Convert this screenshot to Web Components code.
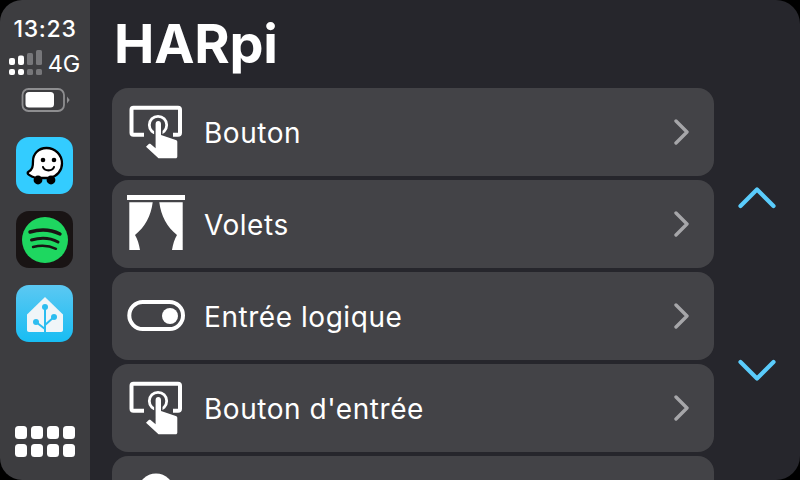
<!DOCTYPE html>
<html>
<head>
<meta charset="utf-8">
<style>
  html, body { margin: 0; padding: 0; width: 800px; height: 480px; background: #000; overflow: hidden; }
</style>
</head>
<body>
<script>
class TouchIcon extends HTMLElement {
  constructor() {
    super();
    this.attachShadow({ mode: 'open' });
    this.shadowRoot.innerHTML = `
      <style>
        :host { display: block; width: 64px; height: 64px; }
        svg { display: block; }
      </style>
      <svg width="64" height="64" viewBox="0 0 64 64" fill="none">
        <path d="M19 34.700H8.500a2 2 0 0 1-2-2V9.700a2 2 0 0 1 2-2H53a2 2 0 0 1 2 2v23a2 2 0 0 1-2 2h-5" stroke="#fff" stroke-width="4"/>
        <circle cx="33" cy="25" r="8.700" stroke="#fff" stroke-width="2.800"/>
        <path d="M33.300 21c-1.700 0-2.700 1.300-2.700 3v24.300l-5-4.300c-.6-.5-1.300-.5-1.800 0L21 46.800l12.500 11.500h17c1.200 0 1.800-.8 1.800-1.800V41.800c0-1-.6-1.600-1.500-1.900L36 35V24c0-1.700-1-3-2.700-3z" fill="#fff" stroke="#434347" stroke-width="3" paint-order="stroke" stroke-linejoin="round"/>
      </svg>
    `;
  }
}

class AppIcon extends HTMLElement {
  constructor() {
    super();
    this.attachShadow({ mode: 'open' });
  }

  connectedCallback() {
    const glyphs = {
      waze: `
        <rect width="57" height="57" fill="#33ccff"/>
        <path d="M30.500 11C22 11 17 17.500 17 24c0 5.500-.5 8.500-4.500 10.800-1.300.8-1 2 .2 2.900 2 1.500 4.500 2.500 7.300 3.300h14C41 39.500 46 33.500 46 26.500 46 17.500 39 11 30.500 11z" fill="#fff" stroke="#000" stroke-width="2.300" stroke-linejoin="round"/>
        <circle cx="22" cy="43" r="4.400" fill="#000"/>
        <circle cx="35" cy="43" r="4.400" fill="#000"/>
        <circle cx="27" cy="23" r="2.300" fill="#000"/>
        <circle cx="38" cy="23" r="2.300" fill="#000"/>
        <path d="M27 30c1.500 4.500 9.500 4.500 11 0" fill="none" stroke="#000" stroke-width="2.100" stroke-linecap="round"/>`,
      spotify: `
        <rect width="57" height="57" fill="#191414"/>
        <circle cx="29" cy="29" r="23" fill="#1ed760"/>
        <g fill="none" stroke="#191414" stroke-linecap="round">
          <path d="M14 21c10-3 21-2.500 30 2" stroke-width="3.400"/>
          <path d="M15.500 29c9-2.500 19-2 26.500 2" stroke-width="3"/>
          <path d="M17 36c8-2 16-1.600 23 1.800" stroke-width="2.400"/>
        </g>`,
      home: `
        <defs><linearGradient id="ha" x1="0" y1="0" x2="0" y2="1"><stop offset="0" stop-color="#5cc8f2"/><stop offset="1" stop-color="#18bdf3"/></linearGradient></defs>
        <rect width="57" height="57" fill="url(#ha)"/>
        <path d="M29 12 11 29.500V45c0 1.200.8 2 2 2h32c1.200 0 2-.8 2-2V29.500z" fill="#f0f5f8"/>
        <g fill="none" stroke="#2cbdf0" stroke-width="2">
          <path d="M29 22v25"/>
          <path d="M20 37l9 7"/>
          <path d="M38 32l-9 8"/>
        </g>
        <circle cx="29" cy="22" r="3" fill="#2cbdf0"/>
        <circle cx="20" cy="37" r="3" fill="#2cbdf0"/>
        <circle cx="38" cy="32" r="3" fill="#2cbdf0"/>`
    };
    this.shadowRoot.innerHTML = `
      <style>
        :host { display: block; width: 57px; height: 57px; }
        svg { display: block; border-radius: 13px; }
      </style>
      <svg width="57" height="57" viewBox="0 0 57 57">${glyphs[this.getAttribute('name')]}</svg>
    `;
  }
}

class CarStatus extends HTMLElement {
  constructor() {
    super();
    this.attachShadow({ mode: 'open' });
    this.shadowRoot.innerHTML = `
      <style>
        :host { display: flex; flex-direction: column; align-items: center; color: #fff; font-family: Inter, "Liberation Sans", sans-serif; }
        .time { font-size: 23px; line-height: 26px; font-weight: 500; letter-spacing: .7px; margin-top: 16px; }
        .net { display: flex; align-items: center; gap: 6px; height: 26px; margin-top: 8px; margin-right: 1px; font-size: 23.500px; }
        .battery { display: block; margin-top: 12px; }
        svg { display: block; }
      </style>
      <div class="time">13:23</div>
      <div class="net">
        <svg width="33" height="26" viewBox="0 0 33 26">
          <g fill="#fff">
            <rect x="0" y="8" width="6" height="7" rx="2"/>
            <rect x="9" y="5.500" width="6" height="9.500" rx="2"/>
            <rect x="0" y="19" width="6" height="6" rx="2"/>
            <rect x="9" y="19" width="6" height="6" rx="2"/>
          </g>
          <g fill="#77777a">
            <rect x="18" y="3" width="6" height="12" rx="1.500"/>
            <rect x="27" y="0" width="6" height="15" rx="1.500"/>
            <rect x="18" y="19" width="6" height="6" rx="1.500"/>
            <rect x="27" y="19" width="6" height="6" rx="1.500"/>
          </g>
        </svg>
        <span>4G</span>
      </div>
      <svg class="battery" width="49" height="24" viewBox="0 0 49 24">
        <rect x="1.500" y="1" width="41.500" height="22" rx="6" fill="none" stroke="#8e8e90" stroke-width="1.800"/>
        <rect x="4.500" y="4" width="28.500" height="15.500" rx="3.500" fill="#fff"/>
        <path d="M46 8.500l2.700 3.500-2.700 3.500z" fill="#8e8e90"/>
      </svg>
    `;
  }
}

class CarSidebar extends HTMLElement {
  constructor() {
    super();
    this.attachShadow({ mode: 'open' });
    this.shadowRoot.innerHTML = `
      <style>
        :host { display: flex; flex-direction: column; align-items: center; width: 90px; height: 480px; flex: none; background: #3d3d40; border-radius: 22px 0 0 22px; box-sizing: border-box; padding-bottom: 23px; }
        .apps { display: flex; flex-direction: column; gap: 17px; margin-top: 25px; margin-right: 1px; }
        .grid { display: grid; grid-template-columns: repeat(4, 12px); grid-auto-rows: 13px; gap: 5px 4px; margin-top: auto; }
        .grid i { background: #fff; border-radius: 3.500px; }
      </style>
      <slot name="status"></slot>
      <div class="apps"><slot></slot></div>
      <div class="grid"><i></i><i></i><i></i><i></i><i></i><i></i><i></i><i></i></div>
    `;
  }
}

class ListRow extends HTMLElement {
  constructor() {
    super();
    this.attachShadow({ mode: 'open' });
    this.shadowRoot.innerHTML = `
      <style>
        :host { display: flex; align-items: center; height: 88px; flex: none; background: #434347; border-radius: 16px; padding: 0 24px 0 13px; color: #fff; font-family: Inter, "Liberation Sans", sans-serif; font-size: 28px; letter-spacing: .55px; }
        .icon { width: 64px; height: 64px; flex: none; margin-right: 15px; }
        .label { flex: 1; white-space: nowrap; padding-top: 2px; }
        svg { display: block; }
        ::slotted(svg) { display: block; }
      </style>
      <div class="icon"><slot name="icon"></slot></div>
      <div class="label"><slot></slot></div>
      <svg width="16" height="26" viewBox="0 0 16 26" fill="none"><path d="M2 2l11 11L2 24" stroke="#a6a6a9" stroke-width="3.400" stroke-linecap="round" stroke-linejoin="round"/></svg>
    `;
  }
}

class CarList extends HTMLElement {
  constructor() {
    super();
    this.attachShadow({ mode: 'open' });
    this.shadowRoot.innerHTML = `
      <style>
        :host { display: block; width: 602px; flex: none; height: 100%; overflow: hidden; }
        .rows { display: flex; flex-direction: column; gap: 4px; }
      </style>
      <div class="rows"><slot></slot></div>
    `;
  }
}

class ScrollButtons extends HTMLElement {
  constructor() {
    super();
    this.attachShadow({ mode: 'open' });
    const chevron = d => `<svg width="38" height="24" viewBox="0 0 38 24" fill="none"><path d="${d}" stroke="#5accfc" stroke-width="4.200" stroke-linecap="round" stroke-linejoin="round"/></svg>`;
    this.shadowRoot.innerHTML = `
      <style>
        :host { display: flex; flex-direction: column; align-items: center; justify-content: space-between; flex: 1; height: 196px; margin-top: 98px; }
        svg { display: block; }
      </style>
      ${chevron('M2.500 20L19 3.500 35.500 20')}
      ${chevron('M2.500 4L19 20.500 35.500 4')}
    `;
  }
}

class CarScreen extends HTMLElement {
  constructor() {
    super();
    this.attachShadow({ mode: 'open' });
    this.shadowRoot.innerHTML = `
      <style>
        :host { display: flex; width: 800px; height: 480px; background: #000; overflow: hidden; }
        main { flex: 1; background: #26262c; border-radius: 0 24px 24px 0; display: flex; flex-direction: column; min-width: 0; overflow: hidden; }
        h1 { margin: 0; height: 88px; box-sizing: border-box; padding: 11px 0 0 24px; font: 700 54px/66px Inter, "Liberation Sans", sans-serif; letter-spacing: -.2px; color: #fff; }
        .body { display: flex; flex: 1; min-height: 0; padding-left: 22px; }
      </style>
      <slot name="sidebar"></slot>
      <main>
        <h1>${this.getAttribute('heading')}</h1>
        <div class="body">
          <slot></slot>
          <scroll-buttons></scroll-buttons>
        </div>
      </main>
    `;
  }
}

customElements.define('touch-icon', TouchIcon);
customElements.define('app-icon', AppIcon);
customElements.define('car-status', CarStatus);
customElements.define('car-sidebar', CarSidebar);
customElements.define('list-row', ListRow);
customElements.define('car-list', CarList);
customElements.define('scroll-buttons', ScrollButtons);
customElements.define('car-screen', CarScreen);

document.body.innerHTML = `
  <car-screen heading="HARpi">
    <car-sidebar slot="sidebar">
      <car-status slot="status"></car-status>
      <app-icon name="waze"></app-icon>
      <app-icon name="spotify"></app-icon>
      <app-icon name="home"></app-icon>
    </car-sidebar>
    <car-list>
      <list-row><touch-icon slot="icon"></touch-icon>Bouton</list-row>
      <list-row>
        <svg slot="icon" width="64" height="64" viewBox="0 0 64 64" fill="#fff">
          <rect x="2" y="3" width="58" height="5"/>
          <path d="M4.300 10.300h23.400C26 24 20 35 10 43c2.500 4 4 9 5 15H4.300z"/>
          <path d="M57.700 10.300H34.300C36 24 42 35 52 43c-2.500 4-4 9-5 15h10.700z"/>
        </svg>
        Volets
      </list-row>
      <list-row>
        <svg slot="icon" width="64" height="64" viewBox="0 0 64 64">
          <rect x="4.300" y="18" width="53.700" height="27" rx="13.500" fill="none" stroke="#fff" stroke-width="4"/>
          <circle cx="45" cy="32" r="8" fill="#fff"/>
        </svg>
        Entrée logique
      </list-row>
      <list-row><touch-icon slot="icon"></touch-icon>Bouton d'entrée</list-row>
      <list-row>
        <svg slot="icon" width="64" height="64" viewBox="0 0 64 64"><circle cx="31" cy="23.500" r="18" fill="#fff"/></svg>
      </list-row>
    </car-list>
  </car-screen>
`;
</script>
</body>
</html>
